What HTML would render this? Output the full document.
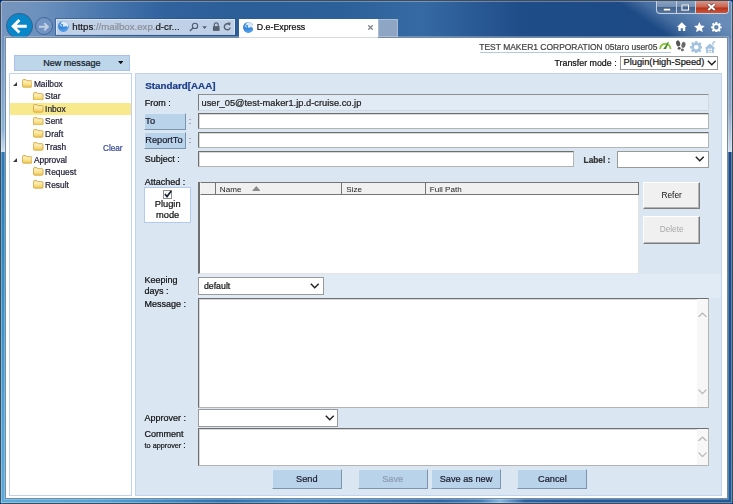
<!DOCTYPE html>
<html lang="en">
<head>
<meta charset="utf-8">
<title>D.e-Express</title>
<style>
html,body{margin:0;padding:0;}
body{width:733px;height:504px;overflow:hidden;position:relative;background:#032e78;font-family:"Liberation Sans",Arial,sans-serif;font-size:8.6px;color:#1a1a1a;}
#win *{position:absolute;box-sizing:border-box;}
#win{filter:blur(0.35px);position:absolute;left:0;top:0;width:733px;height:504px;overflow:hidden;border-radius:5px 5px 4px 4px;}
.t{line-height:1;white-space:nowrap;-webkit-text-stroke:0.22px currentColor;}
.t.thin{-webkit-text-stroke:0;}
#win svg *{position:static;}
/* frame */
#titlebg{left:0;top:0;width:733px;height:40px;background:linear-gradient(90deg,#7896be 0,#6c90bd 40px,#4b79af 100px,#31629e 165px,#2c5e98 230px,#2c6098 340px,#366aa4 420px,#2b5b97 470px,#1f4d88 520px,#1b4882 733px);}
#titlehl{left:560px;top:0;width:173px;height:40px;background:linear-gradient(34.4deg,rgba(104,139,184,0) 49%,rgba(104,139,184,.55) 60%,rgba(104,139,184,1) 80%);}
#frameL{left:0;top:38px;width:6px;height:466px;background:linear-gradient(180deg,#6d92c0 0,#8ab4d8 92px,#d0e0ee 114px,#2878b8 114px,#2a88c2 205px,#48a0d4 365px,#58acdc 466px);}
#frameR{left:727px;top:38px;width:6px;height:466px;background:linear-gradient(180deg,#6a8dba 0,#8aa4c6 70px,#d0dcec 114px,#1a4a88 114px,#1b4f8e 300px,#1e5a9a 466px);}
#frameB{left:0;top:498px;width:733px;height:6px;background:linear-gradient(90deg,#58acdc 0,#4fa3d6 100px,#3585c2 180px,#2a72b4 225px,#4088c4 290px,#3a80c0 350px,#2a68aa 440px,#3f7cb8 480px,#86b6e0 500px,#2a62a4 525px,#1f5a9c 580px,#1e5a9a 733px);}
#edgeT{left:0;top:0;width:733px;height:1px;background:#414a57;}
#edgeL{left:0;top:0;width:1px;height:504px;background:#414a57;}
#edgeR{left:732px;top:0;width:1px;height:504px;background:#414a57;}
#edgeB{left:0;top:503px;width:733px;height:1px;background:#414a57;}
#content{left:5px;top:37px;width:723px;height:462px;background:#fff;border:1px solid #768aa3;box-shadow:0 0 0 0.8px rgba(255,255,255,.33);}
.hl{background:rgba(255,255,255,.3);}
/* chrome */
#back{left:6.3px;top:12.8px;width:26.6px;height:26.6px;border-radius:50%;background:#0a87c8;border:1px solid #35608f;}
#fwd{left:34.9px;top:17.3px;width:18.2px;height:18.2px;border-radius:50%;background:#7194c2;border:1px solid #46689a;}
#addr{left:55.5px;top:19px;width:179.5px;height:16px;background:#c0d1e7;border:1px solid #d9e4f1;border-bottom-color:#b4c7df;box-shadow:0 0 0 1px rgba(40,80,130,.55);}
#tab{left:238.5px;top:18.5px;width:139px;height:20px;background:#fff;}
#newtab{left:377.5px;top:18.5px;width:20.5px;height:18.5px;background:#8ea6c4;border:1px solid #a8bcd4;border-bottom:none;}
#caps{left:656px;top:0.6px;width:72.5px;height:13px;border:1px solid #c5d2e2;border-top:none;border-radius:0 0 4px 4px;overflow:hidden;background:linear-gradient(180deg,#8ba3c2 0,#7490b4 46%,#43638f 52%,#5676a1 100%);}
#capclose{left:37.5px;top:0;width:35px;height:13px;background:linear-gradient(180deg,#d6978b 0,#c9624d 48%,#b93119 52%,#cd5b41 100%);border-left:1px solid #c5d2e2;}
.capsep{top:0;width:1px;height:13px;background:#c5d2e2;}
/* page */
.btn{background:#b9d3ea;border:1px solid;border-color:#dbe7f3 #7d94ad #7d94ad #dbe7f3;}
.bt{font-size:9.2px;color:#1b1b2b;}
.inp{background:#fff;border:1px solid;border-color:#6f6f6f #b4b4b4 #b4b4b4 #6f6f6f;box-shadow:inset 1px 1px 0 #d8d8d8;}
.sel{background:#fff;border:1px solid #9a9a9a;}
.lbl{font-size:9px;color:#111;}
#tree{left:9px;top:73px;width:123px;height:423px;background:#fff;border:1px solid #c2d1ef;}
#panel{left:135px;top:73px;width:587px;height:423px;background:#dae6f2;border:1px solid #c2d3ef;}
.fold{width:10.5px;height:8.7px;}
.ti{font-size:8.4px;color:#23233a;}
.arr{width:0;height:0;border-style:solid;border-width:0 0 4.2px 4.2px;border-color:transparent transparent #3a3a3a transparent;}
.gbtn{background:#f0f0f0;border:1px solid;border-color:#fdfdfd #7c7c7c #7c7c7c #fdfdfd;box-shadow:inset -1px -1px 0 #b4b4b4;font-size:8.2px;text-align:center;}
</style>
</head>
<body>
<div id="win">
  <div id="titlebg"></div><div id="titlehl"></div>
  <div id="frameL"></div><div id="frameR"></div><div id="frameB"></div>
  <div class="hl" style="left:1px;top:1px;width:731px;height:1px"></div><div class="hl" style="left:1px;top:2px;width:1px;height:500px"></div><div class="hl" style="left:731px;top:2px;width:1px;height:500px"></div><div class="hl" style="left:1px;top:502px;width:731px;height:1px"></div>
  <div id="edgeT"></div><div id="edgeL"></div><div id="edgeR"></div><div id="edgeB"></div>

  <!-- browser chrome -->
  <div id="addr"></div>
  <div id="newtab"></div>
  <div id="back"></div>
  <div id="fwd"></div>
  <svg style="left:6.3px;top:12.8px" width="26.6" height="26.6" viewBox="0 0 25 25"><path d="M19.5 12.5H7.4M12.6 6.6L6.7 12.5l5.9 5.9" fill="none" stroke="#fff" stroke-width="2.7" stroke-linecap="butt" stroke-linejoin="miter"/></svg>
  <svg style="left:35.2px;top:17.6px" width="17.5" height="17.5" viewBox="0 0 17.5 17.5"><path d="M4 8.75h8.6M9.3 5.2l3.6 3.55-3.6 3.55" fill="none" stroke="#c2d0e4" stroke-width="1.9"/></svg>
  <div id="content"></div>
  <div id="tab"></div>
  <div style="left:238.5px;top:37px;width:139px;height:1px;background:#d3d9e2"></div>
  <svg style="left:58.4px;top:21.1px" width="10.7" height="10.7" viewBox="0 0 20 20"><circle cx="10" cy="10" r="10" fill="#3787da"/><path d="M1.2 13.5c2.5 2 6 2.5 9.5 1.5s6.5-3 8.8-6.5c.5 3-.5 6.5-3 9s-7 3.5-10.5 1.8-4.3-3.5-4.8-5.8z" fill="#4c9be6"/><path d="M8.5 1c3.5-1.5 8 .5 10 4 1.2 2.5 1 5 .2 6.5-1.5-.5-2.5-1.8-4.5-1.6s-3 1.3-4.5.3.8-2.7-.5-3.9-3-.2-3.5-1.8 1-2.7 2.8-3.5z" fill="#dceaf8"/><path d="M3.5 5.5c1-1 2-1.2 2.5-.5s-.5 1.5.3 2.5 1.8 1 1.5 2.2-2 1-3 .3-2.3-3-1.3-4.5z" fill="#9cc6ef"/></svg>
  <span class="t" style="left:72.3px;top:22.1px;font-size:9.66px;color:#1a1a1a">https<span style="position:static;color:#8a8f98">://mailbox.exp.</span>d-cr...</span>
  <svg style="left:188.6px;top:22.2px" width="10" height="10" viewBox="0 0 11 11"><circle cx="6.6" cy="4.3" r="2.9" fill="none" stroke="#4f5f75" stroke-width="1.25"/><path d="M4.6 6.4L1 10" stroke="#4f5f75" stroke-width="1.5"/></svg>
  <svg style="left:201.8px;top:25.8px" width="5.2" height="3.4" viewBox="0 0 6 4"><path d="M0.3 0.3h5.4L3 3.4z" fill="#4f5f75"/></svg>
  <svg style="left:212px;top:21.9px" width="8.5" height="9.6" viewBox="0 0 8.5 10"><path d="M2.2 4.5V3a2.05 2.05 0 0 1 4.1 0v1.5" fill="none" stroke="#55606f" stroke-width="1.2"/><rect x="0.8" y="4.3" width="6.9" height="5" fill="#55606f"/></svg>
  <svg style="left:223.4px;top:22.3px" width="8.6" height="9" viewBox="0 0 10 10.5"><path d="M7.9 3.6A3.5 3.5 0 1 0 8.4 6.6" fill="none" stroke="#55606f" stroke-width="1.7"/><path d="M5.3 0.4l3.6 0.4-1 3.4z" fill="#55606f"/></svg>
  <svg style="left:242.7px;top:22.2px" width="10.7" height="10.7" viewBox="0 0 20 20"><circle cx="10" cy="10" r="10" fill="#3787da"/><path d="M1.2 13.5c2.5 2 6 2.5 9.5 1.5s6.5-3 8.8-6.5c.5 3-.5 6.5-3 9s-7 3.5-10.5 1.8-4.3-3.5-4.8-5.8z" fill="#4c9be6"/><path d="M8.5 1c3.5-1.5 8 .5 10 4 1.2 2.5 1 5 .2 6.5-1.5-.5-2.5-1.8-4.5-1.6s-3 1.3-4.5.3.8-2.7-.5-3.9-3-.2-3.5-1.8 1-2.7 2.8-3.5z" fill="#dceaf8"/><path d="M3.5 5.5c1-1 2-1.2 2.5-.5s-.5 1.5.3 2.5 1.8 1 1.5 2.2-2 1-3 .3-2.3-3-1.3-4.5z" fill="#9cc6ef"/></svg>
  <span class="t" style="left:256.8px;top:23.3px;font-size:8.8px;color:#111">D.e-Express</span>
  <svg style="left:367.5px;top:24.5px" width="5" height="5" viewBox="0 0 5 5"><path d="M0.3 0.3l4.4 4.4M4.7 0.3L0.3 4.7" stroke="#80848c" stroke-width="1.35"/></svg>

  <div id="caps">
    <div class="capsep" style="left:19px"></div>
    <div id="capclose"></div>
    <svg style="left:6px;top:7px" width="8" height="3.5" viewBox="0 0 8 3.5"><rect x="0.3" y="0.3" width="7.4" height="2.6" fill="#fff" stroke="#4a5a70" stroke-width="0.6"/></svg>
    <svg style="left:24px;top:3px" width="8.5" height="7" viewBox="0 0 8.5 7"><rect x="0.8" y="0.8" width="6.9" height="5.4" fill="none" stroke="#4a5a70" stroke-width="1.6"/><rect x="0.9" y="0.9" width="6.7" height="5.2" fill="none" stroke="#fff" stroke-width="1.1"/></svg>
    <svg style="left:50.3px;top:2.4px" width="9" height="8" viewBox="0 0 9 8"><path d="M1.3 0.9l6.4 6.2M7.7 0.9L1.3 7.1" stroke="#5e2a22" stroke-width="3.2"/><path d="M1.3 0.9l6.4 6.2M7.7 0.9L1.3 7.1" stroke="#fff" stroke-width="2.1"/></svg>
  </div>
  <svg style="left:677.4px;top:22px" width="9.6" height="9.4" viewBox="0 0 10.5 10"><path d="M5.25 0.2L0 5.2h1.5V10h2.6V6.6h2.3V10H9V5.2h1.5z" fill="#fff"/></svg>
  <svg style="left:694.2px;top:21.6px" width="10.8" height="10" viewBox="0 0 12 11"><path d="M6 0l1.75 3.9 4.25 0.4-3.2 2.8 0.95 4.1L6 9 2.25 11.2l0.95-4.1L0 4.3l4.25-0.4z" fill="#fff"/></svg>
  <svg style="left:710.9px;top:21.6px" width="10.7" height="10.7" viewBox="0 0 24 24"><path fill="#fff" fill-rule="evenodd" d="M10 0h4l.6 3.2 2 .8L19.3 2.2l2.8 2.8-1.8 2.7.8 2L24 10v4l-3.2.6-.8 2 1.8 2.7-2.8 2.8-2.7-1.8-2 .8L14 24h-4l-.6-3.2-2-.8-2.7 1.8-2.8-2.8 1.8-2.7-.8-2L0 14v-4l3.2-.6.8-2L2.2 4.7 5 1.9l2.7 1.8 2-.8zM12 7a5 5 0 1 0 0 10a5 5 0 1 0 0-10z"/></svg>

  <!-- page header -->
  <span class="t" style="left:479.3px;top:42.6px;font-size:8.48px;color:#444">TEST MAKER1 CORPORATION 05taro user05</span>
  <div style="left:479.5px;top:51.6px;width:191.7px;height:1px;background:#b4c9ea"></div>
  <svg style="left:659.4px;top:41.2px" width="12.6" height="8.2" viewBox="0 0 12.6 8.2"><path d="M1.1 7.9A5.2 5.2 0 0 1 11.5 7.9" fill="none" stroke="#8cc540" stroke-width="1.9"/><path d="M4.7 7.9L9.4 1l-2.6 6.9z" fill="#3f7f25" stroke="#3f7f25" stroke-width="0.6"/></svg>
  <svg style="left:674.6px;top:40.4px" width="11.8" height="11.8" viewBox="0 0 11 11"><ellipse cx="2.9" cy="3.2" rx="1.9" ry="2.9" fill="#555" transform="rotate(-12 2.9 3.2)"/><ellipse cx="3.9" cy="7.8" rx="1.4" ry="1.3" fill="#555"/><ellipse cx="7.9" cy="4.6" rx="1.9" ry="2.9" fill="#6a6a6a" transform="rotate(12 7.9 4.6)"/><ellipse cx="6.9" cy="9.3" rx="1.4" ry="1.3" fill="#6a6a6a"/></svg>
  <svg style="left:689.5px;top:40.5px" width="12.5" height="12.5" viewBox="0 0 24 24"><path fill="#a3c2e0" fill-rule="evenodd" d="M10 0h4l.6 3.2 2 .8L19.3 2.2l2.8 2.8-1.8 2.7.8 2L24 10v4l-3.2.6-.8 2 1.8 2.7-2.8 2.8-2.7-1.8-2 .8L14 24h-4l-.6-3.2-2-.8-2.7 1.8-2.8-2.8 1.8-2.7-.8-2L0 14v-4l3.2-.6.8-2L2.2 4.7 5 1.9l2.7 1.8 2-.8zM12 7.5a4.5 4.5 0 1 0 0 9a4.5 4.5 0 1 0 0-9z"/></svg>
  <svg style="left:704px;top:40.5px" width="12.5" height="12" viewBox="0 0 12.5 12"><path d="M6 2.5L0.5 7.5h1.6V12h7.8V7.5h1.6z" fill="#a3c2e0"/><path d="M9 4.5V1.6l2.2-1.2" fill="none" stroke="#a3c2e0" stroke-width="1.2"/><path d="M4 7.5h1.6v1.6H4zM6.4 7.5H8v1.6H6.4zM4 9.8h1.6V11.4H4zM6.4 9.8H8V11.4H6.4z" fill="#fff"/></svg>
  <span class="t" style="left:554.5px;top:58.9px;font-size:8.85px;color:#111">Transfer mode :</span>
  <div class="sel" style="left:620px;top:56px;width:98px;height:14px"></div>
  <span class="t" style="left:623.6px;top:58px;font-size:9.25px;color:#111">Plugin(High-Speed)</span>
  <svg style="left:707px;top:60px" width="9.5" height="6" viewBox="0 0 9.5 6"><path d="M0.8 0.8L4.75 4.8 8.7 0.8" fill="none" stroke="#1e1e1e" stroke-width="1.4"/></svg>

  <!-- sidebar -->
  <div style="left:14px;top:55px;width:116px;height:15.8px;background:#bed6ea;border:1px solid #a9c1ea"></div>
  <span class="t" style="left:43.2px;top:58.8px;font-size:9.05px;color:#131a28">New message</span>
  <svg style="left:117.5px;top:61px" width="5.5" height="3.5" viewBox="0 0 5.5 3.5"><path d="M0 0h5.5L2.75 3.3z" fill="#111"/></svg>
  <div id="tree"></div>
  <svg width="0" height="0" style="left:0;top:0"><defs><linearGradient id="fg" x1="0" y1="0" x2="0" y2="1"><stop offset="0" stop-color="#f6dc86"/><stop offset="0.3" stop-color="#fcf0b8"/><stop offset="1" stop-color="#f3c94c"/></linearGradient></defs></svg>
  <div style="left:10px;top:103px;width:121px;height:12.3px;background:#f8e98d"></div>
  <svg class="fold" style="left:21.6px;top:79.1px" viewBox="0 0 11 9"><path d="M0.5 1.6Q0.5 0.5 1.6 0.5H4l1 1.2h4.4Q10.5 1.7 10.5 2.8V7.4Q10.5 8.5 9.4 8.5H1.6Q0.5 8.5 0.5 7.4z" fill="url(#fg)" stroke="#cfa646" stroke-width="0.9"/></svg>
  <span class="t ti" style="left:33.9px;top:79.99px">Mailbox</span>
  <div class="arr" style="left:12.6px;top:82.4px"></div>
  <svg class="fold" style="left:33px;top:91.6px" viewBox="0 0 11 9"><path d="M0.5 1.6Q0.5 0.5 1.6 0.5H4l1 1.2h4.4Q10.5 1.7 10.5 2.8V7.4Q10.5 8.5 9.4 8.5H1.6Q0.5 8.5 0.5 7.4z" fill="url(#fg)" stroke="#cfa646" stroke-width="0.9"/></svg>
  <span class="t ti" style="left:45.1px;top:92.49px">Star</span>
  <svg class="fold" style="left:33px;top:104.1px" viewBox="0 0 11 9"><path d="M0.5 1.6Q0.5 0.5 1.6 0.5H4l1 1.2h4.4Q10.5 1.7 10.5 2.8V7.4Q10.5 8.5 9.4 8.5H1.6Q0.5 8.5 0.5 7.4z" fill="url(#fg)" stroke="#cfa646" stroke-width="0.9"/></svg>
  <span class="t ti" style="left:45.1px;top:104.99px">Inbox</span>
  <svg class="fold" style="left:33px;top:116.6px" viewBox="0 0 11 9"><path d="M0.5 1.6Q0.5 0.5 1.6 0.5H4l1 1.2h4.4Q10.5 1.7 10.5 2.8V7.4Q10.5 8.5 9.4 8.5H1.6Q0.5 8.5 0.5 7.4z" fill="url(#fg)" stroke="#cfa646" stroke-width="0.9"/></svg>
  <span class="t ti" style="left:45.1px;top:117.49px">Sent</span>
  <svg class="fold" style="left:33px;top:129.1px" viewBox="0 0 11 9"><path d="M0.5 1.6Q0.5 0.5 1.6 0.5H4l1 1.2h4.4Q10.5 1.7 10.5 2.8V7.4Q10.5 8.5 9.4 8.5H1.6Q0.5 8.5 0.5 7.4z" fill="url(#fg)" stroke="#cfa646" stroke-width="0.9"/></svg>
  <span class="t ti" style="left:45.1px;top:129.99px">Draft</span>
  <svg class="fold" style="left:33px;top:142.4px" viewBox="0 0 11 9"><path d="M0.5 1.6Q0.5 0.5 1.6 0.5H4l1 1.2h4.4Q10.5 1.7 10.5 2.8V7.4Q10.5 8.5 9.4 8.5H1.6Q0.5 8.5 0.5 7.4z" fill="url(#fg)" stroke="#cfa646" stroke-width="0.9"/></svg>
  <span class="t ti" style="left:45.1px;top:143.29px">Trash</span>
  <svg class="fold" style="left:21.6px;top:154.9px" viewBox="0 0 11 9"><path d="M0.5 1.6Q0.5 0.5 1.6 0.5H4l1 1.2h4.4Q10.5 1.7 10.5 2.8V7.4Q10.5 8.5 9.4 8.5H1.6Q0.5 8.5 0.5 7.4z" fill="url(#fg)" stroke="#cfa646" stroke-width="0.9"/></svg>
  <span class="t ti" style="left:33.9px;top:155.79px">Approval</span>
  <div class="arr" style="left:12.6px;top:158.2px"></div>
  <svg class="fold" style="left:33px;top:167.4px" viewBox="0 0 11 9"><path d="M0.5 1.6Q0.5 0.5 1.6 0.5H4l1 1.2h4.4Q10.5 1.7 10.5 2.8V7.4Q10.5 8.5 9.4 8.5H1.6Q0.5 8.5 0.5 7.4z" fill="url(#fg)" stroke="#cfa646" stroke-width="0.9"/></svg>
  <span class="t ti" style="left:45.1px;top:168.29px">Request</span>
  <svg class="fold" style="left:33px;top:179.9px" viewBox="0 0 11 9"><path d="M0.5 1.6Q0.5 0.5 1.6 0.5H4l1 1.2h4.4Q10.5 1.7 10.5 2.8V7.4Q10.5 8.5 9.4 8.5H1.6Q0.5 8.5 0.5 7.4z" fill="url(#fg)" stroke="#cfa646" stroke-width="0.9"/></svg>
  <span class="t ti" style="left:45.1px;top:180.79px">Result</span>
  <span class="t" style="left:103px;top:144.9px;font-size:8.2px;color:#3b4c93">Clear</span>
  <div id="panel"></div>

  <!-- form -->
  <span class="t" style="left:145.3px;top:81.2px;font-size:9.8px;font-weight:bold;color:#1b3c8c">Standard[AAA]</span>
  <span class="t lbl" style="left:144.7px;top:98.6px">From :</span>
  <div style="left:198px;top:94px;width:511px;height:17px;background:#e1ebf5;border-top:1px solid #8e8e8e;border-left:1px solid #7a7a7a;border-right:1px solid #d0d9e4;border-bottom:1px solid #d0d9e4"></div>
  <span class="t" style="left:201.5px;top:99.2px;font-size:9.3px;color:#222">user_05@test-maker1.jp.d-cruise.co.jp</span>

  <div class="btn" style="left:144.3px;top:113px;width:41.8px;height:16.5px"></div>
  <span class="t bt" style="left:145.3px;top:117px">To</span>
  <span class="t lbl" style="left:188.8px;top:117.3px;color:#8a86a8">:</span>
  <div class="inp" style="left:198px;top:113.2px;width:511px;height:16.3px"></div>

  <div class="btn" style="left:144.3px;top:132.2px;width:41.8px;height:16.5px"></div>
  <span class="t bt" style="left:145.3px;top:136px">ReportTo</span>
  <span class="t lbl" style="left:188.8px;top:136.4px;color:#8a86a8">:</span>
  <div class="inp" style="left:198px;top:132.2px;width:511px;height:16.3px"></div>

  <span class="t lbl" style="left:144.8px;top:154.9px">Subject :</span>
  <div class="inp" style="left:198px;top:151px;width:376.3px;height:16px"></div>
  <span class="t" style="left:583.6px;top:156px;font-size:8.3px;font-weight:bold;color:#333">Label :</span>
  <div class="sel" style="left:617.3px;top:150.5px;width:91.5px;height:17.3px"></div>
  <svg style="left:694.8px;top:156.2px" width="9.5" height="6" viewBox="0 0 9.5 6"><path d="M0.8 0.8L4.75 4.8 8.7 0.8" fill="none" stroke="#1e1e1e" stroke-width="1.4"/></svg>

  <span class="t lbl" style="left:144.7px;top:178px">Attached :</span>
  <div style="left:144.3px;top:187px;width:46.7px;height:35.6px;background:#fff;border:1px solid #b3caf0"></div>
  <div style="left:163px;top:189.6px;width:9.2px;height:9.2px;background:#fff;border:1px solid #8e8e8e"></div>
  <svg style="left:164.2px;top:189.6px" width="8" height="8" viewBox="0 0 8 8"><path d="M0.9 4L3 6.6 7.2 0.9" fill="none" stroke="#1a2238" stroke-width="1.7"/></svg>
  <span class="t" style="left:144.3px;top:200.1px;width:46.7px;text-align:center;font-size:9.3px;color:#111">Plugin</span>
  <span class="t" style="left:144.3px;top:210.6px;width:46.7px;text-align:center;font-size:9.3px;color:#111">mode</span>

  <div style="left:198px;top:182px;width:441px;height:92px;background:#fff;border:1px solid;border-color:#6f6f6f #e4e4e4 #e4e4e4 #6f6f6f;border-left-width:2px"></div>
  <div style="left:199.5px;top:182px;width:439.3px;height:13px;background:#f0f0f0;border:1px solid #757575;border-left-color:#f4f4f4"></div>
  <div style="left:215.4px;top:183px;width:1px;height:11.5px;background:#757575"></div>
  <div style="left:341.3px;top:183px;width:1px;height:11.5px;background:#757575"></div>
  <div style="left:425.3px;top:183px;width:1px;height:11.5px;background:#757575"></div>
  <span class="t thin" style="left:219.8px;top:186.3px;font-size:8.1px;color:#222">Name</span>
  <svg style="left:251.6px;top:185.6px" width="8.6" height="5" viewBox="0 0 8.2 4.8"><path d="M4.1 0L8.2 4.8H0z" fill="#8a8a8a"/></svg>
  <span class="t thin" style="left:346.2px;top:186.3px;font-size:8.1px;color:#222">Size</span>
  <span class="t thin" style="left:429.7px;top:186.3px;font-size:8.1px;color:#222">Full Path</span>

  <div class="gbtn" style="left:643px;top:182px;width:57px;height:27px"></div>
  <span class="t thin" style="left:643.3px;top:190.6px;width:56.7px;text-align:center;font-size:8.3px;color:#111">Refer</span>
  <div class="gbtn" style="left:643px;top:216px;width:57px;height:28px"></div>
  <span class="t thin" style="left:643.3px;top:225.2px;width:56.7px;text-align:center;font-size:8.3px;color:#a9a9a9">Delete</span>

  <div style="left:198px;top:274px;width:523px;height:24px;background:#e1ebf5"></div>
  <span class="t lbl" style="left:144.6px;top:276.2px">Keeping</span>
  <span class="t lbl" style="left:144.6px;top:287.4px">days :</span>
  <div class="sel" style="left:198px;top:277.2px;width:126px;height:17.8px"></div>
  <span class="t" style="left:203.9px;top:282.4px;font-size:8.8px;color:#111">default</span>
  <svg style="left:310.3px;top:283.3px" width="9.5" height="6" viewBox="0 0 9.5 6"><path d="M0.8 0.8L4.75 4.8 8.7 0.8" fill="none" stroke="#1e1e1e" stroke-width="1.4"/></svg>

  <span class="t lbl" style="left:144.6px;top:299.6px">Message :</span>
  <div class="inp" style="left:198px;top:298px;width:511px;height:110px"></div>
  <div style="left:697px;top:299px;width:11px;height:108px;background:#f7f7f7"></div>
  <svg style="left:698.4px;top:311.7px" width="9" height="5.6" viewBox="0 0 9 5.6"><path d="M0.6 5L4.5 1 8.4 5" fill="none" stroke="#b5b5b5" stroke-width="1.2"/></svg>
  <svg style="left:698.4px;top:389px" width="9" height="5.6" viewBox="0 0 9 5.6"><path d="M0.6 0.6L4.5 4.6 8.4 0.6" fill="none" stroke="#b5b5b5" stroke-width="1.2"/></svg>

  <span class="t lbl" style="left:144.6px;top:413.7px">Approver :</span>
  <div class="sel" style="left:198px;top:409px;width:139.6px;height:18px"></div>
  <svg style="left:325.2px;top:415px" width="9.5" height="6" viewBox="0 0 9.5 6"><path d="M0.8 0.8L4.75 4.8 8.7 0.8" fill="none" stroke="#1e1e1e" stroke-width="1.4"/></svg>

  <span class="t lbl" style="left:144.6px;top:430.2px">Comment</span>
  <span class="t" style="left:144.6px;top:441.3px;font-size:7.25px;color:#1a1a1a">to approver <span class="lbl" style="position:static;font-size:8.6px">:</span></span>
  <div class="inp" style="left:198px;top:428px;width:511px;height:38px"></div>
  <div style="left:697px;top:429px;width:11px;height:36px;background:#f7f7f7"></div>
  <svg style="left:698.4px;top:435.7px" width="9" height="5.6" viewBox="0 0 9 5.6"><path d="M0.6 5L4.5 1 8.4 5" fill="none" stroke="#b5b5b5" stroke-width="1.2"/></svg>
  <svg style="left:698.4px;top:451.8px" width="9" height="5.6" viewBox="0 0 9 5.6"><path d="M0.6 0.6L4.5 4.6 8.4 0.6" fill="none" stroke="#b5b5b5" stroke-width="1.2"/></svg>

  <div class="btn" style="left:271.8px;top:469px;width:70px;height:20px"></div>
  <span class="t bt" style="left:271.8px;top:475.1px;width:70px;text-align:center">Send</span>
  <div class="btn" style="left:357.7px;top:469px;width:70px;height:20px"></div>
  <span class="t bt" style="left:357.7px;top:475.1px;width:70px;text-align:center;color:#8d9cb0">Save</span>
  <div class="btn" style="left:430.6px;top:469px;width:70.8px;height:20px"></div>
  <span class="t bt" style="left:430.6px;top:475.1px;width:70.8px;text-align:center">Save as new</span>
  <div class="btn" style="left:517.4px;top:469px;width:70px;height:20px"></div>
  <span class="t bt" style="left:517.4px;top:475.1px;width:70px;text-align:center">Cancel</span>
</div>
</body>
</html>
